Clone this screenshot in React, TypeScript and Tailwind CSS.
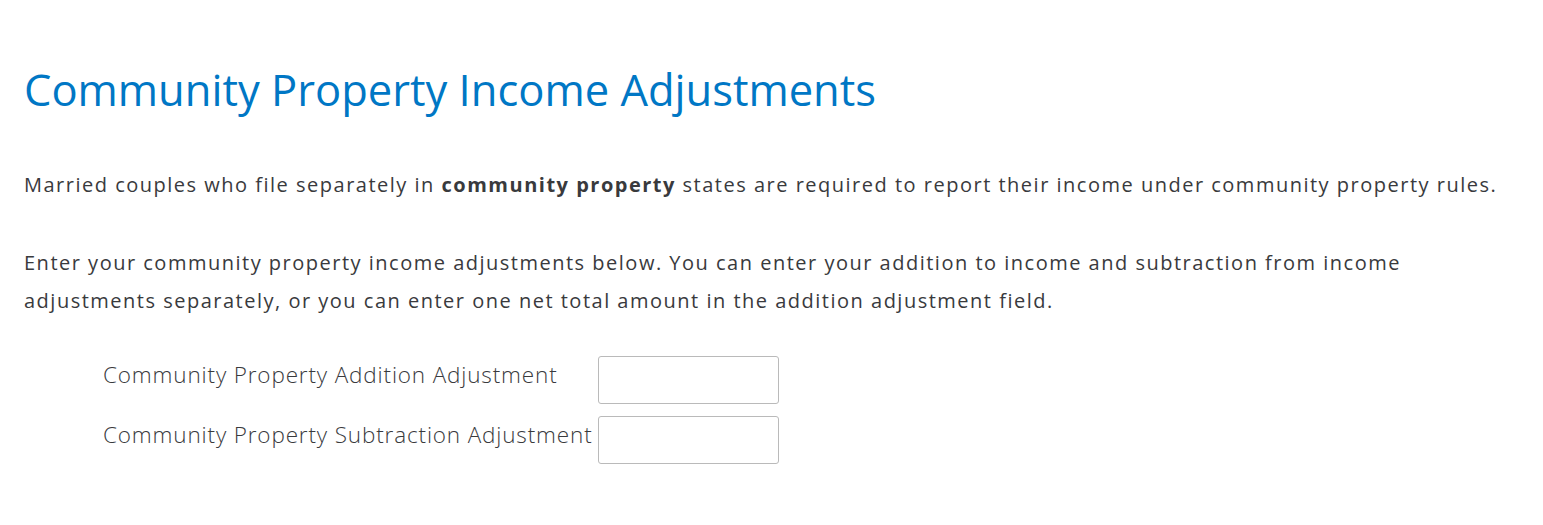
const Field = ({ label }: { label: string }) => {
    return (
        <div className="flex items-center h-[60px]">
            <label className="w-[495px] pb-[11px] text-[22.5px] leading-[30px] tracking-[0.85px] text-[#393a3d] font-light">{label}</label>
            <input type="text" className="w-[181px] h-[48px] border border-[#bababa] rounded-[3px] bg-white" />
        </div>
    );
};

const App = () => {
    return (
        <div className="bg-white min-h-[525px] px-6 pt-[62px] font-['Open_Sans',sans-serif]">
            <h1 className="text-[43.5px] leading-[56px] text-[#0077c5] font-normal">
                Community Property Income Adjustments
            </h1>
            <p className="mt-[48px] text-[20px] leading-[38px] tracking-[1.5px] text-[#393a3d]">
                Married couples who file separately in <b className="font-bold">community property</b> states are required to report their income under community property rules.
            </p>
            <p className="mt-[40px] text-[20px] leading-[38px] tracking-[1.5px] text-[#393a3d] max-w-[1420px]">
                Enter your community property income adjustments below. You can enter your addition to income and subtraction from income adjustments separately, or you can enter one net total amount in the addition adjustment field.
            </p>
            <div className="mt-[30px] pl-[79px]">
                <Field label="Community Property Addition Adjustment" />
                <Field label="Community Property Subtraction Adjustment" />
            </div>
        </div>
    );
};

export default App;
